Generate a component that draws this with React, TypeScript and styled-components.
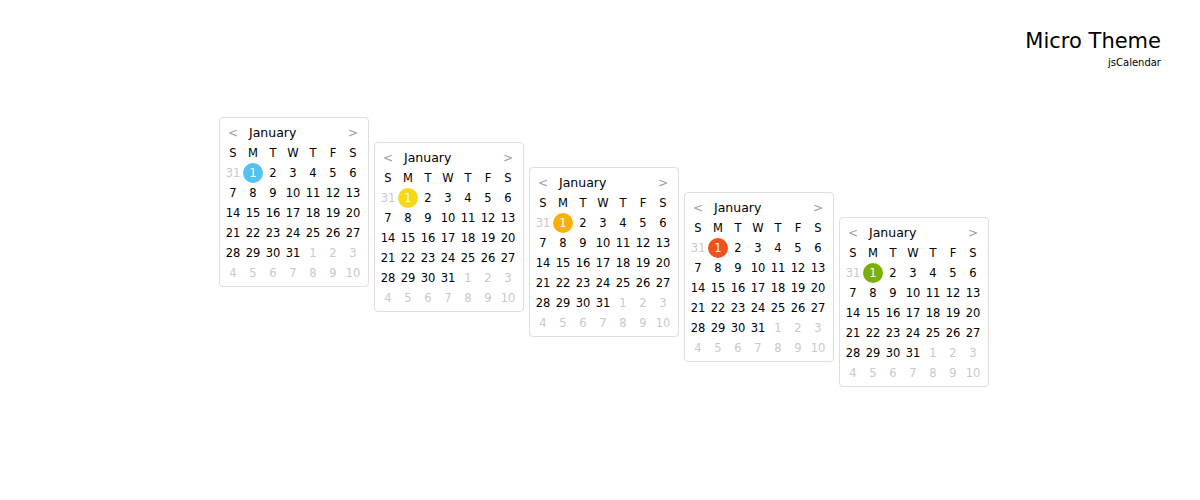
import React from "react";
import styled, { createGlobalStyle } from "styled-components";

const Global = createGlobalStyle`
  html, body { margin: 0; padding: 0; background: #fff; }
  body { font-family: "DejaVu Sans", Verdana, sans-serif; color: #000; }
`;

const Page = styled.div`
  width: 1200px;
  height: 500px;
  overflow: hidden;
`;

const Heading = styled.header`
  padding: 29px 39px 0 0;
  text-align: right;
`;

const Title = styled.h1`
  margin: 0;
  font-size: 21px;
  line-height: 24px;
  font-weight: normal;
  color: #000;
`;

const Subtitle = styled.div`
  margin-top: 4px;
  font-size: 10px;
  line-height: 12px;
  color: #000;
`;

const Row = styled.div`
  margin-top: 48px;
  display: flex;
  align-items: flex-start;
  gap: 5px;
  padding-left: 219px;
`;

const Card = styled.div<{ $offset: number }>`
  box-sizing: border-box;
  width: 150px;
  margin-top: ${(p) => p.$offset}px;
  border: 1px solid #e2dce3;
  border-radius: 4px;
  padding: 4px 5px 3px 3px;
  background: #fff;
`;

const Header = styled.div`
  display: grid;
  grid-template-columns: 20px 1fr 20px;
  height: 21px;
  align-items: center;
`;

const Arrow = styled.span`
  text-align: center;
  font-size: 12px;
  color: #a596b8;
  line-height: 20px;
`;

const Month = styled.span`
  font-size: 12.5px;
  line-height: 20px;
  padding-left: 6px;
  color: #000;
`;

const Grid = styled.div`
  display: grid;
  grid-template-columns: repeat(7, 20px);
  grid-auto-rows: 20px;
`;

const DayName = styled.div`
  font-size: 11.5px;
  line-height: 20px;
  text-align: center;
  color: #000;
`;

const Cell = styled.div<{ $other?: boolean }>`
  font-size: 11.5px;
  line-height: 20px;
  text-align: center;
  color: ${(p) => (p.$other ? "#cec5d1" : "#000")};
  display: flex;
  align-items: center;
  justify-content: center;
`;

const Today = styled.span<{ $color: string }>`
  width: 20px;
  height: 20px;
  border-radius: 50%;
  background: ${(p) => p.$color};
  color: #fff;
  line-height: 20px;
  text-align: center;
`;

const colors = ["#52c2f0", "#f7d716", "#f8b102", "#f1511f", "#7bb001"];

type D = { n: number; other: boolean; today: boolean };
const days: D[] = [];
days.push({ n: 31, other: true, today: false });
for (let i = 1; i <= 31; i++) days.push({ n: i, other: false, today: i === 1 });
for (let i = 1; i <= 10; i++) days.push({ n: i, other: true, today: false });

const names = ["S", "M", "T", "W", "T", "F", "S"];

function Calendar({ color, offset }: { color: string; offset: number }) {
  return (
    <Card $offset={offset}>
      <Header>
        <Arrow>&lt;</Arrow>
        <Month>January</Month>
        <Arrow>&gt;</Arrow>
      </Header>
      <Grid>
        {names.map((n, i) => (
          <DayName key={"n" + i}>{n}</DayName>
        ))}
        {days.map((d, i) => (
          <Cell key={i} $other={d.other}>
            {d.today ? <Today $color={color}>{d.n}</Today> : d.n}
          </Cell>
        ))}
      </Grid>
    </Card>
  );
}

export default function App() {
  return (
    <Page>
      <Global />
      <Heading>
        <Title>Micro Theme</Title>
        <Subtitle>jsCalendar</Subtitle>
      </Heading>
      <Row>
        {colors.map((c, i) => (
          <Calendar key={c} color={c} offset={i * 25} />
        ))}
      </Row>
    </Page>
  );
}
